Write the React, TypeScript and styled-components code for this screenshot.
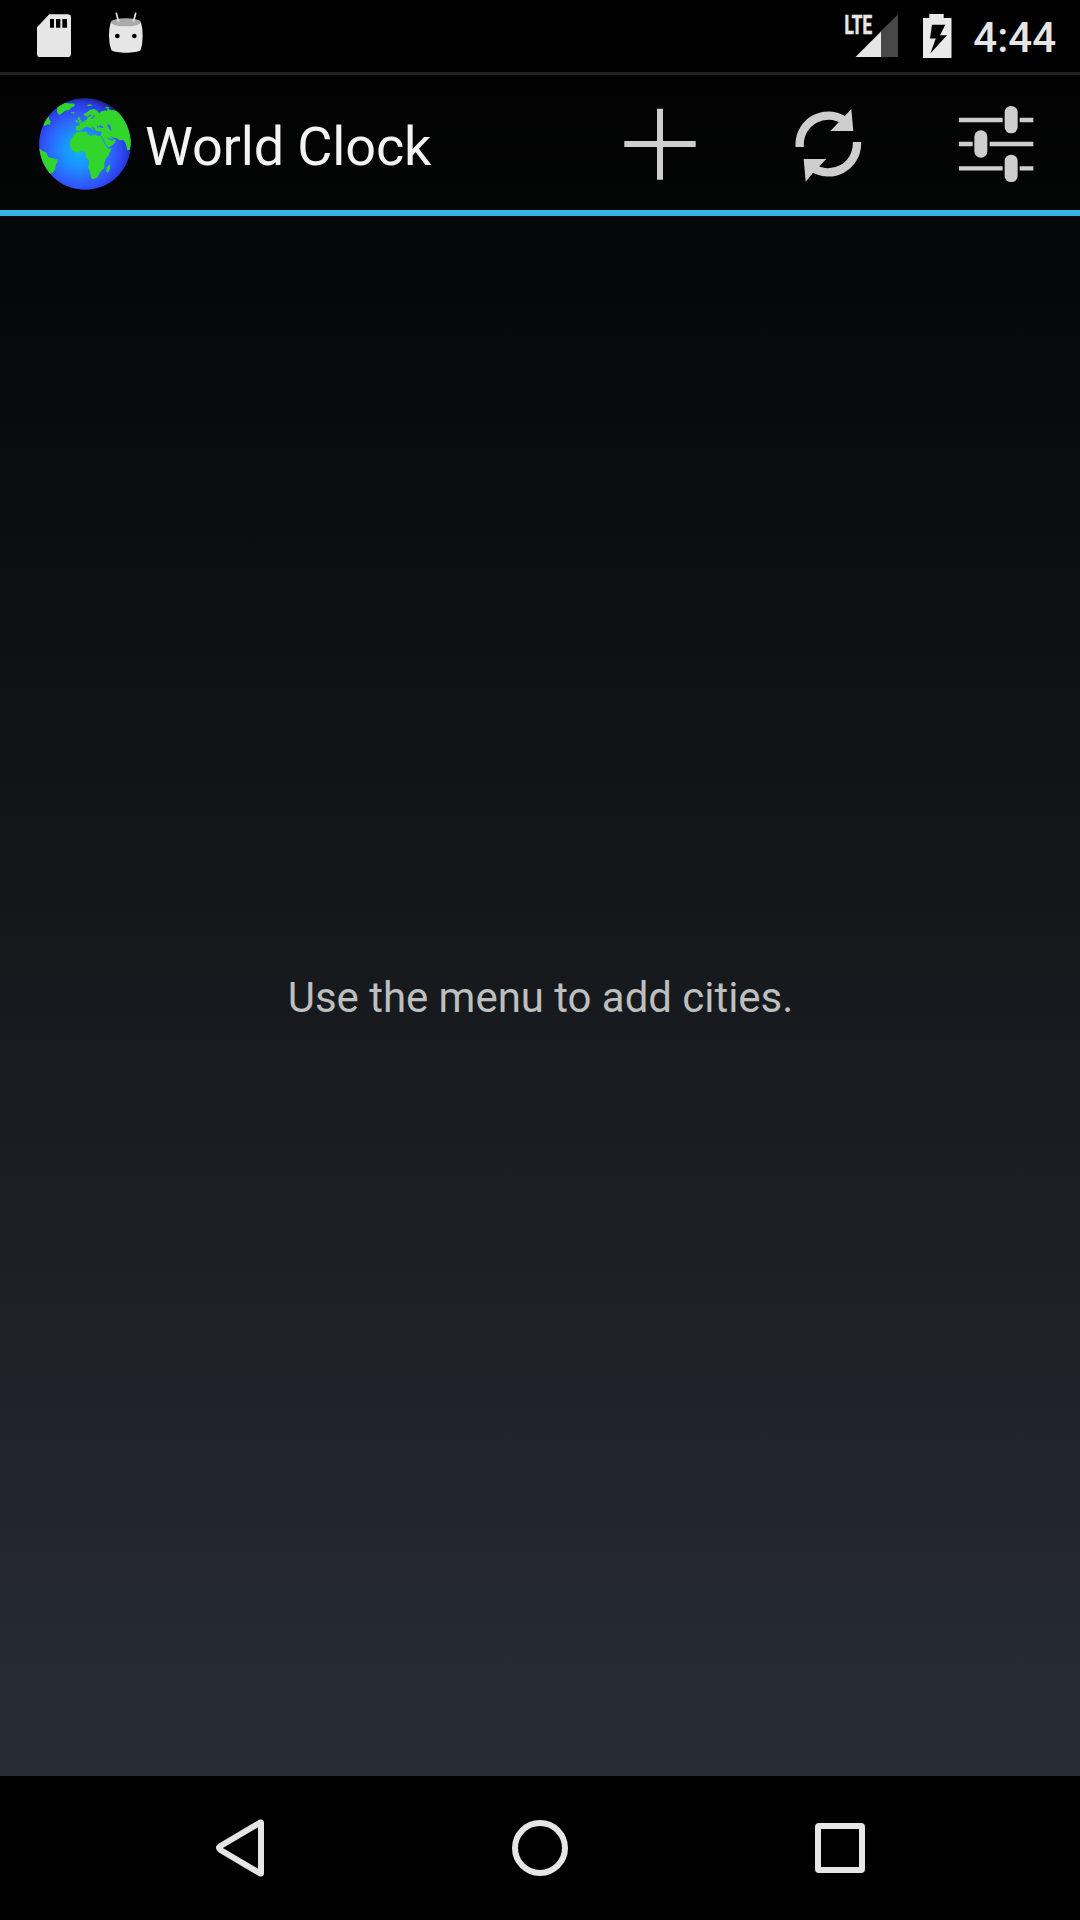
import React from "react";
import styled, { createGlobalStyle } from "styled-components";

const GlobalStyle = createGlobalStyle`
  body { margin: 0; background: #000; }
  svg { display: block; flex: none; }
`;

const Screen = styled.div`
  display: flex;
  flex-direction: column;
  width: 1080px;
  height: 1920px;
  overflow: hidden;
  background: linear-gradient(#000 0, #282d34 1776px);
  font-family: Roboto, "Noto Sans", sans-serif;
`;

const StatusBar = styled.header`
  display: flex;
  justify-content: space-between;
  height: 72px;
  flex: none;
  background: #000;
  color: #e6e6e6;
`;

const StatusGroup = styled.div<{ $start?: number; $end?: number }>`
  display: flex;
  align-items: center;
  padding-left: ${(p) => p.$start ?? 0}px;
  padding-right: ${(p) => p.$end ?? 0}px;
`;

const Time = styled.time`
  font-size: 42px;
  line-height: 49px;
  font-weight: 500;
  margin: 3px 0 0 18px;
`;

const ActionBar = styled.div`
  display: flex;
  align-items: center;
  height: 144px;
  flex: none;
  box-sizing: border-box;
  padding-left: 30px;
  box-shadow: inset 0 3px #212121, inset 0 -6px #33b5e5;
`;

const Title = styled.h1`
  margin: 5px auto 0 4px;
  font-size: 54px;
  line-height: 64px;
  font-weight: 400;
  letter-spacing: -0.15px;
  color: #f3f3f3;
`;

const ActionButton = styled.button`
  display: flex;
  align-items: center;
  justify-content: center;
  width: 168px;
  height: 144px;
  padding: 0;
  border: 0;
  background: none;
`;

const Content = styled.main`
  display: flex;
  flex: 1;
  align-items: center;
  justify-content: center;
`;

const Message = styled.p`
  margin: 4px 0 0 1px;
  font-size: 42px;
  line-height: 50px;
  letter-spacing: -0.04px;
  color: #bebebe;
`;

const NavBar = styled.nav`
  display: flex;
  justify-content: center;
  height: 144px;
  flex: none;
  background: #000;
`;

const NavButton = styled.button`
  display: flex;
  align-items: center;
  justify-content: center;
  width: 300px;
  padding: 0;
  border: 0;
  background: none;
`;

const SdCardIcon = () => (
  <svg width="36" height="72" viewBox="48 0 108 216">
    <path fill="#e6e6e6" fillRule="evenodd" d="M88 43H143Q153 43 153 53V161Q153 171 143 171H61Q51 171 51 161V82ZM90 57V83H102V57ZM108 57V83H121V57ZM127 57V83H141V57Z" />
  </svg>
);

const DroidIcon = () => (
  <svg width="36" height="72" viewBox="264 0 108 216">
    <path fill="#e6e6e6" d="M272 67C290 78 346 78 363 67Q368 84 368 108Q368 132 362 150C350 161 286 161 274 150Q267 132 267 108Q267 84 272 67Z" />
    <ellipse cx="317.500" cy="67" rx="45" ry="12" fill="#aaa" />
    <path d="M289 40L295 63M347 40L341 63" stroke="#e6e6e6" strokeWidth="5" strokeLinecap="round" />
    <circle cx="292" cy="108" r="7" fill="#000" />
    <circle cx="343" cy="108" r="7" fill="#000" />
  </svg>
);

const SignalIcon = () => (
  <svg width="60" height="72" viewBox="0 0 60 72">
    <path fill="#484848" d="M56 14.500V57H38V32Z" />
    <path fill="#e6e6e6" d="M39 31.500V57H13.500Z" />
    <text x="2.500" y="33.500" fill="#e6e6e6" stroke="#e6e6e6" strokeWidth=".7" fontSize="26" fontWeight="700" textLength="27.500" lengthAdjust="spacingAndGlyphs">LTE</text>
  </svg>
);

const BatteryIcon = () => (
  <svg width="36" height="72" viewBox="0 0 36 72">
    <path fill="#e9e9e9" fillRule="evenodd" d="M10.300 14H24.700V18H32.500V58H4V18H10.300ZM13 24.700L11 38.500H16.800L11.300 53.500L28 35.200H21L26.300 24.700Z" />
  </svg>
);

const GlobeIcon = () => (
  <svg width="111" height="108" viewBox="0 0 333 324">
    <defs>
      <radialGradient id="ocean" gradientUnits="userSpaceOnUse" cx="150" cy="180" r="165">
        <stop offset="0" stopColor="#12b0ff" />
        <stop offset=".3" stopColor="#1a94ff" />
        <stop offset=".65" stopColor="#3058ff" />
        <stop offset=".86" stopColor="#2939e0" />
        <stop offset="1" stopColor="#17206d" />
      </radialGradient>
      <clipPath id="disc"><circle cx="165" cy="162" r="137.500" /></clipPath>
    </defs>
    <circle cx="165" cy="162" r="137.500" fill="url(#ocean)" />
    <g clipPath="url(#disc)" fill="#31d52b">
      <path d="M82 50L89 43L104 39L134 41L133 49L123 53L118 60L105 62L97 69L88 75L81 67Z" />
      <path d="M45 92L52 83L57 79L58 89L63 95L60 99L62 104L53 103L44 108L40 102Z" />
      <path d="M27 175L39 184L48 187L55 201L68 205L83 209L82 217L77 224L76 237L68 249L59 251L40 240L24 210Z" />
      <path d="M122 67L134 66L133 70L124 70ZM170 45L182 43L188 46L175 49ZM226 50L238 52L235 56L227 55ZM145 81L151 83L149 88L156 94L153 98L145 98L147 91L143 88ZM137 91L142 89L144 97L137 98Z" />
      <path d="M137 109L149 107L148 99L160 95L171 88L174 80L184 79L181 73L172 80L163 78L162 71L173 66L179 59L192 57L203 63L208 70L215 64L226 61L231 63L233 56L244 61L253 61L268 67L283 83L303 130L303 162L299 180L292 180L287 160L280 150L269 151L259 144L250 143L240 138L250 147L257 149L257 155L249 164L233 174L227 167L218 149L213 138L216 145L224 159L232 175L244 176L237 194L227 207L223 220L223 233L211 246L202 262L193 267L185 267L180 245L174 232L178 214L168 201L166 186L157 183L141 188L128 182L119 168L121 150L130 137L139 127L153 125L170 125L173 133L184 139L189 133L202 137L213 137L214 125L202 124L195 121L192 113L185 108L191 123L181 114L170 110L161 113L154 121L139 123Z" />
      <path d="M231 232L238 223L241 229L238 242L232 249L229 243Z" />
    </g>
    <g fill="#3d66f4">
      <path d="M201 107L206 109L211 105L218 109L221 113L213 113L207 111L201 113ZM233 101L240 104L243 112L245 122L240 121L236 114L232 108ZM191 74L195 77L192 83L186 87L183 86L189 80Z" />
      <path d="M236 147L241 145L249 148L248 151L240 151Z" />
    </g>
    <path d="M214 139L223 157L233 174M233 144L242 149L250 151" fill="none" stroke="#2b87f6" strokeWidth="3.500" />
  </svg>
);

const AddIcon = () => (
  <svg width="100" height="108" viewBox="0 0 300 324">
    <path d="M150 56V269M43 162H257" stroke="#cecece" strokeWidth="18" />
  </svg>
);

const RefreshIcon = () => (
  <svg width="100" height="108" viewBox="-6 0 300 324">
    <path d="M59 171V162A86 86 0 0 1 192 91M231 156V162A86 86 0 0 1 98 233" fill="none" stroke="#cecece" strokeWidth="25" />
    <path fill="#cecece" d="M214 57L220 123H151L192 80ZM71 207H139L98 250L77 275Z" />
  </svg>
);

const TuneIcon = () => (
  <svg width="110" height="108" viewBox="3 0 330 324">
    <path d="M57 90H188M239 90H280M57 162H98M149 162H280M57 235H188M239 235H280" stroke="#cecece" strokeWidth="13" />
    <g fill="#cecece">
      <rect x="194" y="48" width="39" height="82" rx="19" />
      <rect x="103" y="121" width="39" height="82" rx="19" />
      <rect x="194" y="194" width="39" height="82" rx="19" />
    </g>
  </svg>
);

const BackIcon = () => (
  <svg width="60" height="60" viewBox="0 0 60 60">
    <path d="M51 5V55Q51 56 49.500 55L10.500 32Q7.500 30 10.500 28L49.500 5Q51 4 51 5Z" fill="none" stroke="#e6e6e6" strokeWidth="6" strokeLinejoin="round" />
  </svg>
);

const HomeIcon = () => (
  <svg width="60" height="60" viewBox="0 0 60 60">
    <circle cx="30" cy="30" r="25" fill="none" stroke="#e6e6e6" strokeWidth="6" />
  </svg>
);

const RecentsIcon = () => (
  <svg width="60" height="60" viewBox="0 0 60 60">
    <path fill="#e6e6e6" fillRule="evenodd" d="M9 5H51Q55 5 55 9V51Q55 55 51 55H9Q5 55 5 51V9Q5 5 9 5ZM11 11V49H49V11Z" />
  </svg>
);

const SdSlot = styled.div`
  margin-right: 36px;
`;

const SignalSlot = styled.div`
  margin-right: 17px;
`;

export default function App() {
  return (
    <Screen>
      <GlobalStyle />
      <StatusBar>
        <StatusGroup $start={36}>
          <SdSlot><SdCardIcon /></SdSlot>
          <DroidIcon />
        </StatusGroup>
        <StatusGroup $end={24}>
          <SignalSlot><SignalIcon /></SignalSlot>
          <BatteryIcon />
          <Time>4:44</Time>
        </StatusGroup>
      </StatusBar>
      <ActionBar>
        <GlobeIcon />
        <Title>World Clock</Title>
        <ActionButton aria-label="Add"><AddIcon /></ActionButton>
        <ActionButton aria-label="Refresh"><RefreshIcon /></ActionButton>
        <ActionButton aria-label="Settings"><TuneIcon /></ActionButton>
      </ActionBar>
      <Content>
        <Message>Use the menu to add cities.</Message>
      </Content>
      <NavBar>
        <NavButton aria-label="Back"><BackIcon /></NavButton>
        <NavButton aria-label="Home"><HomeIcon /></NavButton>
        <NavButton aria-label="Recents"><RecentsIcon /></NavButton>
      </NavBar>
    </Screen>
  );
}
